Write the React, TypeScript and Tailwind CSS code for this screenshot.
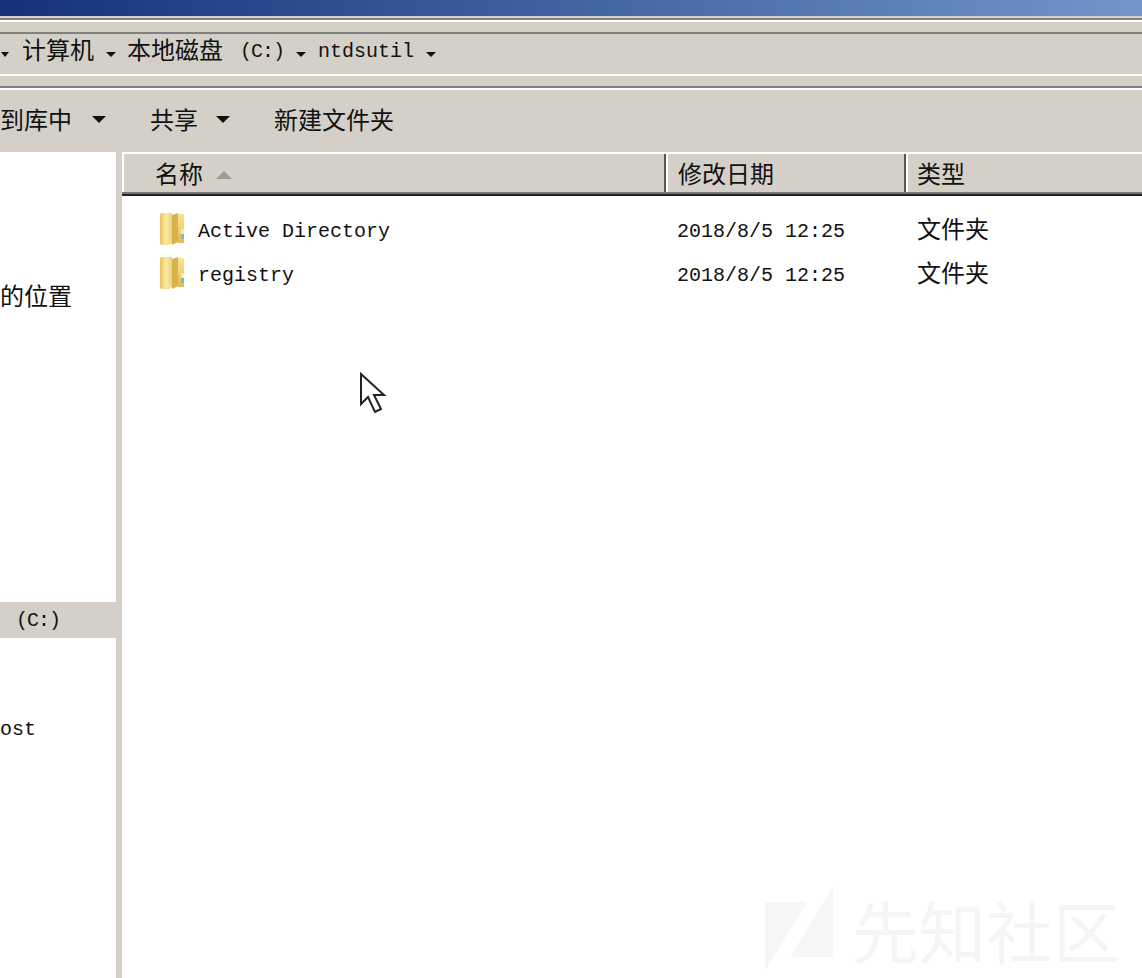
const mono = "font-['Liberation_Mono','Noto_Sans_CJK_SC',monospace]";

const Arrow = ({ className }: { className: string }) => (
  <svg viewBox="0 0 14 8" preserveAspectRatio="none" className={className}>
    <polygon points="0,0 14,0 7,8" fill="#111" />
  </svg>
);

const FolderIcon = () => (
  <svg width="28" height="34" viewBox="0 0 28 34" className="shrink-0">
    <defs>
      <linearGradient id="folderLeft" x1="0" x2="1" y1="0" y2="0">
        <stop offset="0" stopColor="#e6c158" />
        <stop offset="0.5" stopColor="#f9eca6" />
        <stop offset="1" stopColor="#ecd070" />
      </linearGradient>
      <linearGradient id="folderRight" x1="0" x2="0" y1="0" y2="1">
        <stop offset="0" stopColor="#f6e493" />
        <stop offset="1" stopColor="#e2bd55" />
      </linearGradient>
    </defs>
    <path d="M1 3 Q1 1 3 1 H13 V31 L10 33 H3 Q1 33 1 31 Z" fill="url(#folderLeft)" />
    <path d="M13 3 L19 1 V30 L13 33 Z" fill="#d9b24e" />
    <path d="M19 2 H24 Q25 2 25 4 V31 H19 Z" fill="url(#folderRight)" />
    <rect x="22" y="17" width="3" height="5" fill="#f2e6d0" />
    <rect x="22" y="22" width="3" height="5" fill="#7ab8d8" />
  </svg>
);

const HeaderCell = ({ label, className, sort }: { label: string; className: string; sort?: boolean }) => (
  <div className={`${className} h-full flex items-center gap-[13px] pt-[7px] border-l-2 border-white text-[24px] leading-none text-[#111]`}>
    {label}
    {sort && (
      <svg viewBox="0 0 16 8" className="w-[16px] h-[8px] mt-[-4px]">
        <polygon points="8,0 16,8 0,8" fill="#9a9a9a" />
      </svg>
    )}
  </div>
);

const files = [
  { name: "Active Directory", date: "2018/8/5 12:25", kind: "文件夹" },
  { name: "registry", date: "2018/8/5 12:25", kind: "文件夹" },
];

const App = () => {
  return (
    <div className={`relative w-[1142px] h-[978px] overflow-hidden bg-white flex flex-col ${mono}`}>
      {/* title bar */}
      <div className="h-[16px] shrink-0 bg-linear-to-r from-[#15317a] to-[#7296ca]" />
      <div className="h-[2px] shrink-0 bg-[#d4d0c8]" />
      <div className="h-[2px] shrink-0 bg-[#808080]" />
      <div className="h-[2px] shrink-0 bg-white" />
      <div className="h-[10px] shrink-0 bg-[#d4d0c8]" />
      <div className="h-[2px] shrink-0 bg-[#808080]" />

      {/* address bar */}
      <div className="h-[40px] shrink-0 bg-[#d4d0c8] flex items-center text-[#111] whitespace-nowrap">
        <Arrow className="w-[8px] h-[5px] ml-[1px]" />
        <span className="ml-[13px] w-[72px] text-[24px] leading-none mt-[-2px]">计算机</span>
        <Arrow className="w-[10px] h-[5px] ml-[12px]" />
        <span className="ml-[11px] w-[96px] text-[24px] leading-none mt-[-2px]">本地磁盘</span>
        <span className="ml-[17px] w-[43px] text-[20px] leading-none tracking-[-1px] mt-[-4px]">(C:)</span>
        <Arrow className="w-[10px] h-[5px] ml-[13px]" />
        <span className="ml-[12px] w-[96px] text-[20px] leading-none mt-[-4px]">ntdsutil</span>
        <Arrow className="w-[10px] h-[5px] ml-[12px]" />
      </div>

      <div className="h-[2px] shrink-0 bg-white" />
      <div className="h-[10px] shrink-0 bg-[#d4d0c8]" />
      <div className="h-[2px] shrink-0 bg-[#808080]" />
      <div className="h-[2px] shrink-0 bg-white" />

      {/* toolbar */}
      <div className="h-[62px] shrink-0 bg-[#d4d0c8] flex items-center text-[24px] leading-none text-[#111] whitespace-nowrap">
        <span className="w-[72px] mt-[4px]">到库中</span>
        <Arrow className="w-[14px] h-[7px] ml-[20px] mt-[-3px]" />
        <span className="ml-[44px] w-[48px] mt-[4px]">共享</span>
        <Arrow className="w-[14px] h-[7px] ml-[18px] mt-[-3px]" />
        <span className="ml-[44px] mt-[4px]">新建文件夹</span>
      </div>

      {/* body */}
      <div className="flex-1 flex min-h-0">
        {/* nav pane, cut off on the left */}
        <div className="w-[116px] shrink-0 bg-white flex flex-col text-[#111] whitespace-nowrap">
          <div className="mt-[135px] h-[24px] text-[24px] leading-none">的位置</div>
          <div className="mt-[291px] h-[36px] bg-[#d4d0c8] flex items-center pl-[16px] pt-[2px] text-[20px] leading-none tracking-[-1px]">
            (C:)
          </div>
          <div className="mt-[82px] text-[20px] leading-none">ost</div>
        </div>
        <div className="w-[6px] shrink-0 bg-[#d4d0c8]" />

        {/* file list */}
        <div className="flex-1 min-w-0 flex flex-col">
          <div className="h-[44px] shrink-0 bg-[#d4d0c8] border-t-2 border-white border-b-2 border-b-[#222]">
            <div className="flex border-b-2 border-b-[#777] h-full">
              <HeaderCell label="名称" className="w-[544px] pl-[31px] border-r-2 border-r-[#555]" sort />
              <HeaderCell label="修改日期" className="w-[240px] pl-[10px] border-r-2 border-r-[#555]" />
              <HeaderCell label="类型" className="flex-1 pl-[9px]" />
            </div>
          </div>

          <div className="pt-[13px] flex flex-col gap-[4px]">
            {files.map((file) => (
              <div key={file.name} className="h-[40px] flex items-center text-[#111]">
                <div className="w-[555px] pl-[37px] flex items-center gap-[11px] text-[20px] leading-none">
                  <FolderIcon />
                  <span className="mt-[6px]">{file.name}</span>
                </div>
                <div className="w-[240px] text-[20px] leading-none whitespace-pre mt-[5px]">{file.date}</div>
                <div className="text-[24px] leading-none mt-[6px]">{file.kind}</div>
              </div>
            ))}
          </div>
        </div>
      </div>

      {/* mouse pointer */}
      <svg width="28" height="44" viewBox="0 0 28 44" className="absolute left-[359px] top-[372px]">
        <path d="M2 2 V32 L9 25 L16 40 L22 37 L15 23 H25 Z" fill="#fff" stroke="#222" strokeWidth="2" strokeLinejoin="miter" />
      </svg>

      {/* watermark */}
      <div className="absolute left-[765px] top-[887px] flex items-start gap-[18px] text-[#f5f5f5]">
        <svg width="69" height="84" viewBox="0 0 69 84">
          <polygon points="0,15 42,15 0,84" fill="#f6f6f6" />
          <polygon points="68,0 68,70 25,70" fill="#f6f6f6" />
        </svg>
        <span className="mt-[8px] text-[67px] leading-none whitespace-nowrap font-['Noto_Sans_CJK_SC',sans-serif]">先知社区</span>
      </div>
    </div>
  );
};

export default App;
